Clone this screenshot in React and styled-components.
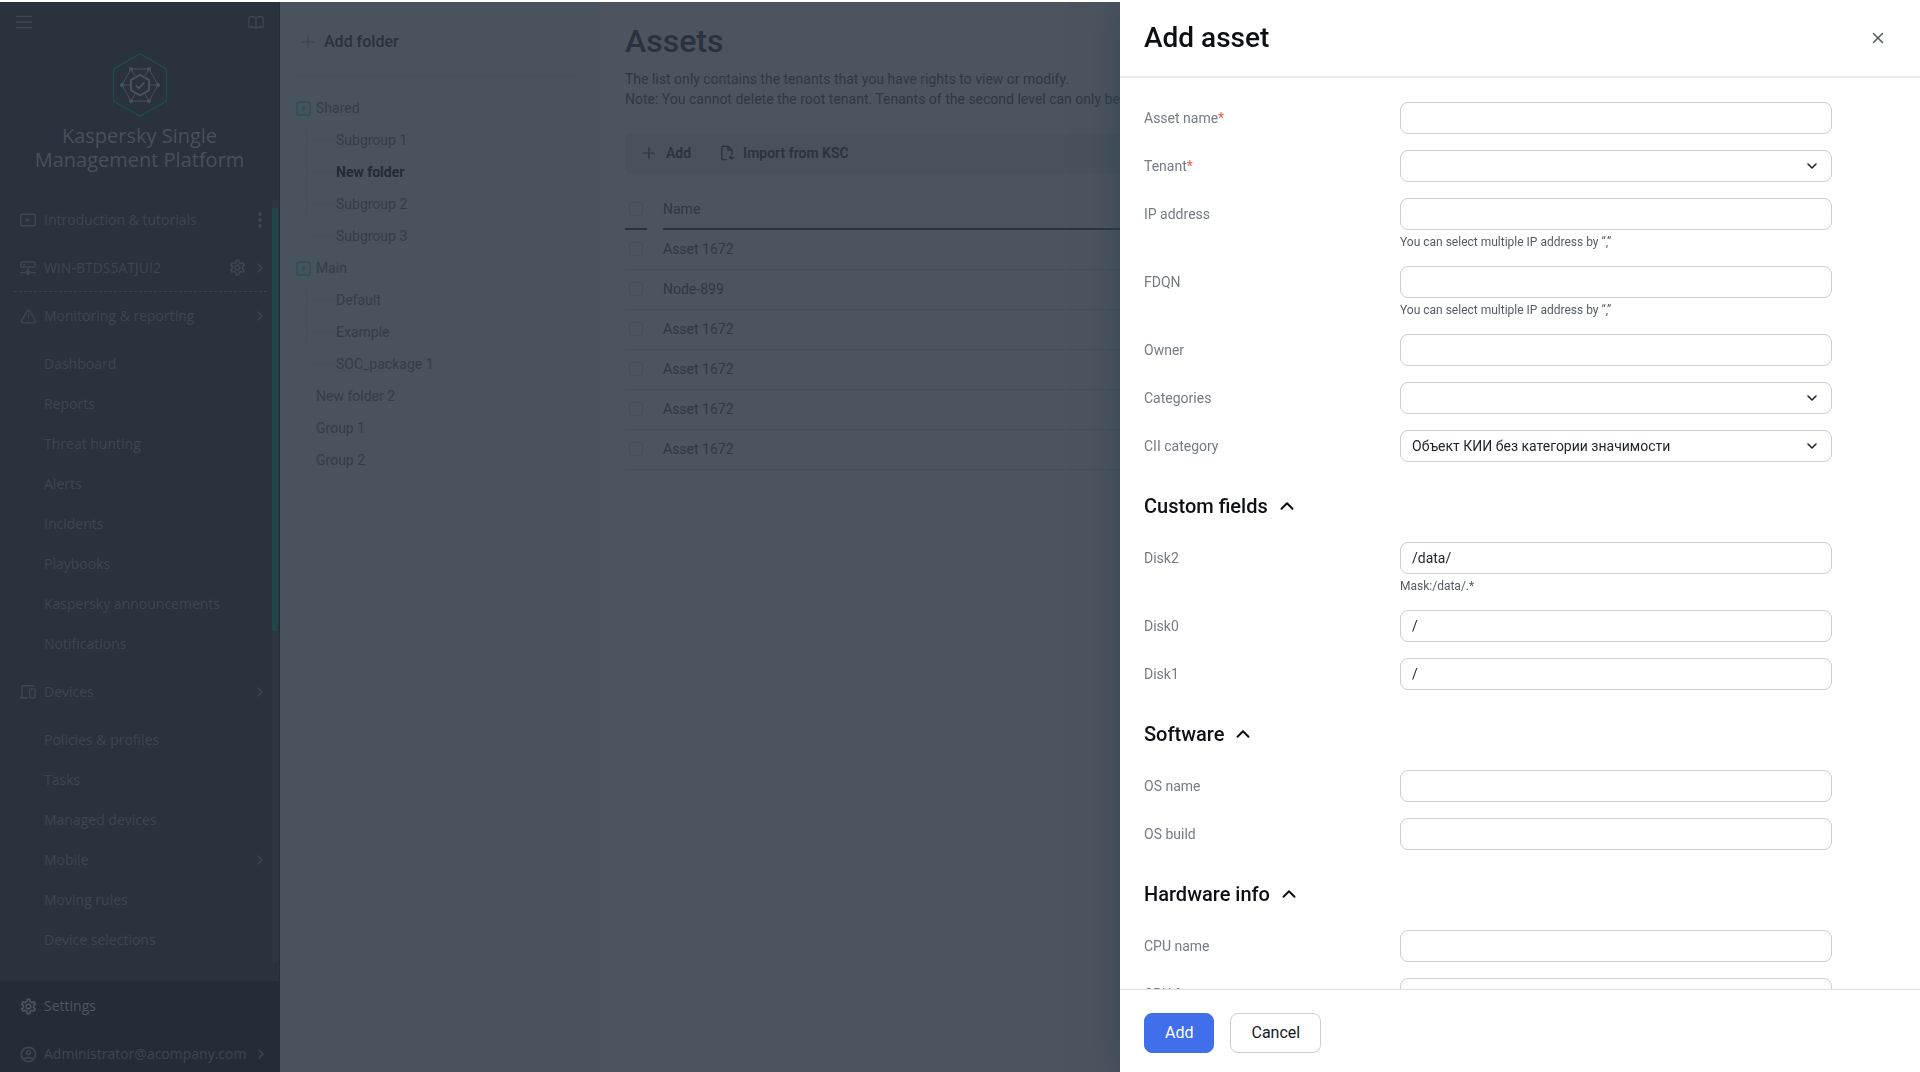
import React, { useState } from "react";
import styled, { createGlobalStyle } from "styled-components";
import {
  ChevronDown,
  ChevronRight,
  ChevronUp,
  Plus,
  TriangleAlert,
  X,
} from "lucide-react";
import { MdOutlineAccountCircle, MdOutlineSettings } from "react-icons/md";

const monitoringItems = [
  "Dashboard",
  "Reports",
  "Threat hunting",
  "Alerts",
  "Incidents",
  "Playbooks",
  "Kaspersky announcements",
  "Notifications",
];

const deviceItems = [
  "Policies & profiles",
  "Tasks",
  "Managed devices",
  "Mobile",
  "Moving rules",
  "Device selections",
];

const folders = [
  {
    name: "Shared",
    children: ["Subgroup 1", "New folder", "Subgroup 2", "Subgroup 3"],
  },
  { name: "Main", children: ["Default", "Example", "SOC_package 1"] },
  { name: "New folder 2" },
  { name: "Group 1" },
  { name: "Group 2" },
];

const assets = [
  "Asset 1672",
  "Node-899",
  "Asset 1672",
  "Asset 1672",
  "Asset 1672",
  "Asset 1672",
];

const ipHint = "You can select multiple IP address by “,”";

const mainFields = [
  { id: "assetName", label: "Asset name", required: true },
  { id: "tenant", label: "Tenant", required: true, options: [""] },
  { id: "ip", label: "IP address", hint: ipHint },
  { id: "fdqn", label: "FDQN", hint: ipHint },
  { id: "owner", label: "Owner" },
  { id: "categories", label: "Categories", options: [""] },
  {
    id: "cii",
    label: "CII category",
    options: ["Объект КИИ без категории значимости"],
  },
];

const sections = [
  {
    title: "Custom fields",
    fields: [
      { id: "disk2", label: "Disk2", value: "/data/", hint: "Mask:/data/.*" },
      { id: "disk0", label: "Disk0", value: "/" },
      { id: "disk1", label: "Disk1", value: "/" },
    ],
  },
  {
    title: "Software",
    fields: [
      { id: "osName", label: "OS name" },
      { id: "osBuild", label: "OS build" },
    ],
  },
  {
    title: "Hardware info",
    fields: [
      { id: "cpuName", label: "CPU name" },
      { id: "cpuFrequency", label: "CPU frequency" },
    ],
  },
];

//icons
const MenuIcon = () => (
  <svg width="16" height="16" viewBox="0 0 16 16" stroke="currentColor" strokeWidth="1.4">
    <path d="M0 2.5h16M0 8h16M0 13.5h16" />
  </svg>
);

const BookIcon = () => (
  <svg width="16" height="16" viewBox="0 0 16 16" fill="none" stroke="currentColor" strokeWidth="1.4" strokeLinejoin="round">
    <path d="M8 4.2C7.4 3 6.3 2.7 5 2.7H2.2C1.4 2.7.9 3.2.9 4v9.2h4.4c1.3 0 2.2.2 2.7.8.5-.6 1.4-.8 2.7-.8h4.4V4c0-.8-.5-1.3-1.3-1.3H11c-1.3 0-2.4.3-3 1.5ZM8 4.2V14" />
  </svg>
);

const PlayIcon = () => (
  <svg width="16" height="16" viewBox="0 0 16 16" fill="none" stroke="currentColor" strokeWidth="1.4">
    <rect x=".8" y="2.2" width="14.4" height="11.6" rx="1.4" />
    <path d="m6.3 5.8 4 2.2-4 2.2Z" fill="currentColor" stroke="none" />
  </svg>
);

const ServerIcon = () => (
  <svg width="16" height="16" viewBox="0 0 16 16" fill="none" stroke="currentColor" strokeWidth="1.4">
    <rect x=".8" y="2" width="14.4" height="5" rx="1.6" />
    <path d="M8 7v4M0 12.6h5.4M10.6 12.6H16M3 4.5h2" />
    <circle cx="8" cy="12.6" r="1.6" fill="currentColor" />
  </svg>
);

const DevicesIcon = () => (
  <svg width="16" height="16" viewBox="0 0 16 16" fill="none" stroke="currentColor" strokeWidth="1.4">
    <path d="M14.2 3.2C14.200 2.200 13.700 1.700 12.700 1.700H3.600C2.500 1.700 1.900 2.300 1.900 3.400v9.800M0 13.700h8" />
    <rect x="9.700" y="5" width="5.400" height="9" rx="1.500" />
  </svg>
);

const KebabIcon = () => (
  <svg width="4" height="16" viewBox="0 0 4 16" fill="currentColor">
    <circle cx="2" cy="2" r="2" />
    <circle cx="2" cy="8" r="2" />
    <circle cx="2" cy="14" r="2" />
  </svg>
);

const ImportIcon = () => (
  <svg width="14" height="16" viewBox="0 0 14 16" fill="none" stroke="currentColor" strokeWidth="1.4">
    <path d="M6.200 14.600H2.200c-.8 0-1.400-.6-1.400-1.400V2.600c0-.8.6-1.400 1.400-1.400h4.800L11 5.200v4.400M7 1.200v4.200h4" />
    <path d="M13.400 12.600H8.600M10.600 10.600l-2 2 2 2" />
  </svg>
);

const ExpandIcon = () => (
  <svg width="15" height="15" viewBox="0 0 15 15" fill="none" stroke="#2a505a" strokeWidth="1.3">
    <rect x="1" y="1" width="13" height="13" rx="1.5" />
    <path d="M7.500 4.800v5.400M4.800 7.500h5.400" />
  </svg>
);

const LogoIcon = () => (
  <svg width="56" height="64" viewBox="0 0 56 64" fill="none" stroke="#48515c">
    <path
      d="M26 1.8a4 4 0 0 1 4 0l22.6 13a4 4 0 0 1 2 3.5v27.4a4 4 0 0 1-2 3.5L30 62.2a4 4 0 0 1-4 0L3.4 49.2a4 4 0 0 1-2-3.5V18.3a4 4 0 0 1 2-3.5Z"
      stroke="#21484f"
      strokeWidth="1.5"
    />
    <path d="M19 16h18l9 16-9 16H19l-9-16ZM19 16l4 7M37 16l-4 7M10 32h9M46 32h-9M19 48l4-7M37 48l-4-7" />
    <path d="m28 21.8 9 5.2v10.2l-9 5.2-9-5.2V27Z" strokeWidth="2" />
    <path d="m23.8 32.4 3 3 5.6-6" strokeWidth="2" />
    <g fill="#48515c" stroke="none">
      <circle cx="19" cy="16" r="2" />
      <circle cx="37" cy="16" r="2" />
      <circle cx="46" cy="32" r="2" />
      <circle cx="37" cy="48" r="2" />
      <circle cx="19" cy="48" r="2" />
      <circle cx="10" cy="32" r="2" />
    </g>
  </svg>
);

const Field = ({ field }) => {
  const [value, setValue] = useState(
    field.options ? field.options[0] : field.value || ""
  );
  const changer = (e) => setValue(e.target.value);

  return (
    <FieldRow>
      <FieldLabel htmlFor={field.id}>
        {field.label}
        {field.required && <Required>*</Required>}
      </FieldLabel>
      <FieldControl>
        {field.options ? (
          <SelectBox>
            <Select id={field.id} value={value} onChange={changer}>
              {field.options.map((option) => (
                <option key={option}>{option}</option>
              ))}
            </Select>
            <ChevronDown size={16} strokeWidth={2.4} />
          </SelectBox>
        ) : (
          <Input id={field.id} type="text" value={value} onChange={changer} />
        )}
        {field.hint && <Hint>{field.hint}</Hint>}
      </FieldControl>
    </FieldRow>
  );
};

const Section = ({ title, fields }) => {
  const [open, setOpen] = useState(true);
  const Arrow = open ? ChevronUp : ChevronDown;

  return (
    <>
      <SectionTitle>
        <SectionButton type="button" onClick={() => setOpen(!open)}>
          {title}
          <Arrow size={22} strokeWidth={2.2} />
        </SectionButton>
      </SectionTitle>
      {open && (
        <FieldList>
          {fields.map((field) => (
            <Field key={field.id} field={field} />
          ))}
        </FieldList>
      )}
    </>
  );
};

const Arrow = () => (
  <ArrowSlot>
    <ChevronRight size={16} />
  </ArrowSlot>
);

const SubMenu = ({ items }) => (
  <SubList>
    {items.map((item) => (
      <SubItem key={item} href="#">
        <NavText>{item}</NavText>
        {item === "Mobile" && <Arrow />}
      </SubItem>
    ))}
  </SubList>
);

const App = () => {
  return (
    <Page>
      <GlobalStyle />
      <Sidebar>
        <SidebarTop>
          <IconButton type="button" aria-label="Menu">
            <MenuIcon />
          </IconButton>
          <IconButton type="button" aria-label="Help">
            <BookIcon />
          </IconButton>
        </SidebarTop>
        <Brand>
          <LogoIcon />
          <BrandName>Kaspersky Single Management Platform</BrandName>
        </Brand>
        <NavArea>
          <Nav>
            <NavItem href="#">
              <IconSlot>
                <PlayIcon />
              </IconSlot>
              <NavText>Introduction &amp; tutorials</NavText>
              <ArrowSlot>
                <KebabIcon />
              </ArrowSlot>
            </NavItem>
            <NavItem href="#" $dashed>
              <IconSlot>
                <ServerIcon />
              </IconSlot>
              <NavText>WIN-BTDS5ATJUI2</NavText>
              <IconSlot>
                <MdOutlineSettings size={19} />
              </IconSlot>
              <Arrow />
            </NavItem>
            <NavItem href="#">
              <IconSlot>
                <TriangleAlert size={17} />
              </IconSlot>
              <NavText>Monitoring &amp; reporting</NavText>
              <Arrow />
            </NavItem>
            <SubMenu items={monitoringItems} />
            <NavItem href="#">
              <IconSlot>
                <DevicesIcon />
              </IconSlot>
              <NavText>Devices</NavText>
              <Arrow />
            </NavItem>
            <SubMenu items={deviceItems} />
          </Nav>
          <ScrollTrack>
            <ScrollThumb />
          </ScrollTrack>
        </NavArea>
        <SidebarFooter>
          <NavItem href="#" $bright>
            <IconSlot>
              <MdOutlineSettings size={19} />
            </IconSlot>
            <NavText>Settings</NavText>
          </NavItem>
          <NavItem href="#">
            <IconSlot>
              <MdOutlineAccountCircle size={19} />
            </IconSlot>
            <NavText>Administrator@acompany.com</NavText>
            <Arrow />
          </NavItem>
        </SidebarFooter>
      </Sidebar>

      <FolderPanel>
        <AddFolder type="button">
          <Plus size={20} strokeWidth={1} />
          Add folder
        </AddFolder>
        <Tree>
          {folders.map((folder) => (
            <li key={folder.name}>
              <FolderRow>
                <Toggle>{folder.children && <ExpandIcon />}</Toggle>
                {folder.name}
              </FolderRow>
              {folder.children && (
                <SubTree>
                  {folder.children.map((child) => (
                    <SubFolder key={child} $selected={child === "New folder"}>
                      {child}
                    </SubFolder>
                  ))}
                </SubTree>
              )}
            </li>
          ))}
        </Tree>
      </FolderPanel>

      <Content>
        <PageTitle>Assets</PageTitle>
        <Description>
          The list only contains the tenants that you have rights to view or
          modify.
          <br />
          Note: You cannot delete the root tenant. Tenants of the second level
          can only be
        </Description>
        <Toolbar>
          <ToolButton type="button">
            <Plus size={18} strokeWidth={1.6} />
            Add
          </ToolButton>
          <ToolButton type="button">
            <ImportIcon />
            Import from KSC
          </ToolButton>
        </Toolbar>
        <Table>
          <thead>
            <tr>
              <CheckHead>
                <CheckBox type="checkbox" aria-label="Select all" />
              </CheckHead>
              <GapHead />
              <NameHead>Name</NameHead>
            </tr>
          </thead>
          <tbody>
            {assets.map((asset, index) => (
              <tr key={index}>
                <Cell>
                  <CheckBox type="checkbox" aria-label={asset} />
                </Cell>
                <Cell />
                <Cell>{asset}</Cell>
              </tr>
            ))}
          </tbody>
        </Table>
      </Content>

      <Drawer>
        <DrawerHeader>
          <DrawerTitle>Add asset</DrawerTitle>
          <CloseButton type="button" aria-label="Close">
            <X size={18} />
          </CloseButton>
        </DrawerHeader>
        <DrawerBody>
          <FieldList>
            {mainFields.map((field) => (
              <Field key={field.id} field={field} />
            ))}
          </FieldList>
          {sections.map((section) => (
            <Section key={section.title} {...section} />
          ))}
        </DrawerBody>
        <DrawerFooter>
          <Button type="submit" $primary>
            Add
          </Button>
          <Button type="button">Cancel</Button>
        </DrawerFooter>
      </Drawer>
    </Page>
  );
};

export default App;

const GlobalStyle = createGlobalStyle`
  * {
    box-sizing: border-box;
  }
  body {
    margin: 0;
    font-family: Roboto, "Liberation Sans", sans-serif;
    font-size: 14px;
    line-height: 20px;
  }
  button, input, select {
    font: inherit;
    color: inherit;
  }
  a {
    color: inherit;
    text-decoration: none;
  }
  ul {
    margin: 0;
    padding: 0;
    list-style: none;
  }
  svg {
    flex: none;
  }
`;

const Page = styled.div`
  display: flex;
  height: 100vh;
  padding-top: 2px;
  overflow: hidden;
  background: #ffffff;
`;

const Sidebar = styled.aside`
  display: flex;
  flex-direction: column;
  flex: none;
  width: 280px;
  font-family: "Open Sans", "Noto Sans", sans-serif;
  color: #3d4752;
  background: #2a323d;
  border-right: 1px solid #252d38;
`;

const SidebarTop = styled.div`
  display: flex;
  justify-content: space-between;
  padding: 12px 15px 0 16px;
`;

const IconButton = styled.button`
  display: flex;
  padding: 0;
  border: none;
  background: none;
`;

const Brand = styled.div`
  display: flex;
  flex-direction: column;
  align-items: center;
  gap: 7px;
  padding: 23px 24px 24px;
`;

const BrandName = styled.h2`
  margin: 0;
  font-size: 20px;
  line-height: 24px;
  font-weight: 500;
  text-align: center;
  color: #47515c;
`;

const NavArea = styled.div`
  display: flex;
  flex: 1;
  min-height: 0;
`;

const Nav = styled.nav`
  flex: 1;
  min-width: 0;
  overflow: hidden;
`;

const NavItem = styled.a`
  display: flex;
  align-items: center;
  gap: 8px;
  height: 48px;
  margin: 0 5px 0 14px;
  padding-left: 6px;
  color: ${(props) => (props.$bright ? "#4d5661" : "inherit")};
  border-bottom: ${(props) => (props.$dashed ? "1px dashed #3a4450" : "none")};
`;

const NavText = styled.span`
  flex: 1;
  white-space: nowrap;
`;

const IconSlot = styled.span`
  display: flex;
  justify-content: center;
  width: 16px;
`;

const ArrowSlot = styled(IconSlot)`
  width: 14px;
`;

const SubList = styled.div`
  padding: 4px 5px 4px 44px;
`;

const SubItem = styled.a`
  display: flex;
  align-items: center;
  height: 40px;
`;

const ScrollTrack = styled.div`
  width: 6px;
  margin: 4px 1px 18px 0;
  padding-top: 8px;
  background: #2d3641;
`;

const ScrollThumb = styled.div`
  height: 56%;
  background: #22454c;
`;

const SidebarFooter = styled.div`
  flex: none;
  height: 91px;
  padding: 1px 7px 0 0;
  overflow: hidden;
  background: #242d37;
`;

const FolderPanel = styled.section`
  flex: none;
  width: 320px;
  padding: 16px 24px 0 16px;
  color: #333d48;
  background: #49535d;
`;

const AddFolder = styled.button`
  display: flex;
  align-items: center;
  gap: 6px;
  width: 100%;
  height: 58px;
  padding: 0 0 10px 2px;
  border: none;
  border-bottom: 1px solid #455059;
  background: none;
  font-size: 16px;
  font-weight: 500;
  color: #28323d;

  svg {
    color: #343e49;
  }
`;

const Tree = styled.ul`
  padding-top: 16px;
`;

const FolderRow = styled.div`
  display: flex;
  align-items: center;
  gap: 5px;
  height: 32px;
`;

const Toggle = styled.span`
  display: flex;
  width: 15px;
`;

const SubTree = styled.ul`
  padding-left: 10px;
`;

const SubFolder = styled.li`
  display: flex;
  align-items: center;
  gap: 2px;
  height: 32px;
  border-left: 1px solid #46505b;
  font-weight: ${(props) => (props.$selected ? 700 : 400)};
  color: ${(props) => (props.$selected ? "#222b36" : "inherit")};

  &::before {
    content: "";
    width: 27px;
    height: 1px;
    background: #46505b;
  }
  &:last-child {
    border-left-color: transparent;
  }
`;

const Content = styled.main`
  flex: 1;
  min-width: 0;
  padding: 19px 25px;
  color: #2f3844;
  background: #4d545f;
`;

const PageTitle = styled.h1`
  margin: 0;
  font-size: 32px;
  line-height: 40px;
  font-weight: 500;
  color: #29323e;
`;

const Description = styled.p`
  margin: 8px 0 24px;
  white-space: nowrap;
`;

const Toolbar = styled.div`
  display: flex;
  align-items: center;
  gap: 30px;
  height: 40px;
  padding: 0 15px;
  border-radius: 6px;
  background: #48525c;
`;

const ToolButton = styled.button`
  display: flex;
  align-items: center;
  gap: 8px;
  padding: 0;
  border: none;
  background: none;
  font-weight: 600;
  color: #2a343f;
`;

const Table = styled.table`
  width: 100%;
  margin-top: 16px;
  border-collapse: collapse;
  table-layout: fixed;
`;

const HeadCell = styled.th`
  height: 40px;
  padding: 0;
  text-align: left;
  font-weight: 400;
`;

const CheckHead = styled(HeadCell)`
  width: 22px;
  border-bottom: 2px solid #2a3440;
`;

const GapHead = styled(HeadCell)`
  width: 16px;
`;

const NameHead = styled(HeadCell)`
  border-bottom: 2px solid #2a3440;
`;

const Cell = styled.td`
  height: 40px;
  padding: 0;
  border-bottom: 1px solid #444f5a;
`;

const CheckBox = styled.input`
  display: block;
  appearance: none;
  width: 14px;
  height: 14px;
  margin: 0 0 0 4px;
  border: 1px solid #444f5a;
  border-radius: 3px;
`;

const Drawer = styled.aside`
  position: fixed;
  top: 2px;
  right: 0;
  bottom: 0;
  display: flex;
  flex-direction: column;
  width: 800px;
  max-width: 100%;
  color: #1d222b;
  background: #ffffff;
  box-shadow: -4px 0 32px rgba(44, 66, 84, 0.6);
  clip-path: inset(0 0 0 -60px);
`;

const DrawerHeader = styled.header`
  display: flex;
  align-items: center;
  justify-content: space-between;
  height: 76px;
  padding: 0 30px 3px 24px;
  border-bottom: 2px solid #e8e9f0;
`;

const DrawerTitle = styled.h2`
  margin: 0;
  font-size: 28px;
  line-height: 36px;
  font-weight: 500;
  color: #0d0f14;
`;

const CloseButton = styled(IconButton)`
  align-items: center;
  justify-content: center;
  width: 24px;
  height: 24px;
  color: #50565f;
`;

const DrawerBody = styled.div`
  flex: 1;
  min-height: 0;
  overflow: hidden;
  padding: 24px 88px 0 24px;
`;

const FieldList = styled.div`
  display: flex;
  flex-direction: column;
  gap: 16px;
`;

const FieldRow = styled.div`
  display: grid;
  grid-template-columns: 256px 1fr;
  align-items: start;
`;

const FieldLabel = styled.label`
  line-height: 32px;
  color: #757b85;
`;

const Required = styled.span`
  color: #ec5a52;
`;

const FieldControl = styled.div`
  display: flex;
  flex-direction: column;
  gap: 4px;
`;

const Input = styled.input`
  width: 100%;
  height: 32px;
  padding: 0 11px;
  border: 1px solid #cbced3;
  border-radius: 8px;
  background: #ffffff;
`;

const SelectBox = styled.div`
  display: grid;
  align-items: center;

  > * {
    grid-area: 1 / 1;
  }
  > svg {
    justify-self: end;
    margin-right: 12px;
    pointer-events: none;
  }
`;

const Select = styled.select`
  appearance: none;
  width: 100%;
  height: 32px;
  padding: 0 32px 0 11px;
  border: 1px solid #cbced3;
  border-radius: 8px;
  background: #ffffff;
`;

const Hint = styled.span`
  font-size: 12px;
  line-height: 16px;
  color: #555c66;
`;

const SectionTitle = styled.h3`
  margin: 32px 0 24px;
  font-size: 20px;
  line-height: 24px;
  font-weight: 500;
  color: #0d0f14;
`;

const SectionButton = styled.button`
  display: flex;
  align-items: center;
  gap: 8px;
  padding: 0;
  border: none;
  background: none;
`;

const DrawerFooter = styled.footer`
  display: flex;
  gap: 16px;
  padding: 23px 24px 19px;
  border-top: 1px solid #dfe1e6;
`;

const Button = styled.button`
  height: 40px;
  padding: 0 20px;
  border: 1px solid ${(props) => (props.$primary ? "#416fec" : "#cbced2")};
  border-radius: 8px;
  font-size: 16px;
  color: ${(props) => (props.$primary ? "#ffffff" : "#16191f")};
  background: ${(props) => (props.$primary ? "#416fec" : "#ffffff")};
`;
